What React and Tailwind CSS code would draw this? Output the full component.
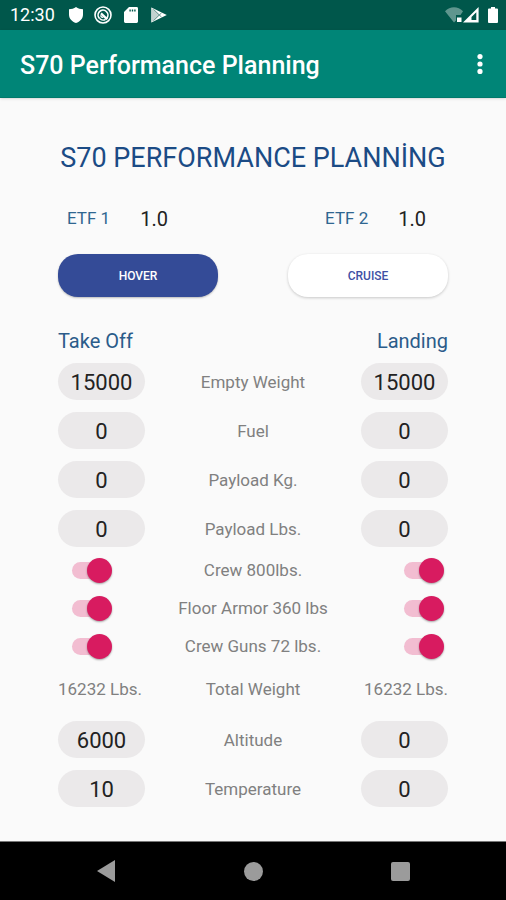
import { useState } from "react";

const WEIGHT_ROWS = [
  { id: "empty", label: "Empty Weight" },
  { id: "fuel", label: "Fuel" },
  { id: "payloadKg", label: "Payload Kg." },
  { id: "payloadLbs", label: "Payload Lbs." },
];

const SWITCH_ROWS = [
  { id: "crew", label: "Crew 800lbs." },
  { id: "armor", label: "Floor Armor 360 lbs" },
  { id: "guns", label: "Crew Guns 72 lbs." },
];

const AIR_ROWS = [
  { id: "altitude", label: "Altitude" },
  { id: "temperature", label: "Temperature" },
];

const INITIAL = {
  takeOff: { empty: "15000", fuel: "0", payloadKg: "0", payloadLbs: "0", crew: true, armor: true, guns: true, altitude: "6000", temperature: "10" },
  landing: { empty: "15000", fuel: "0", payloadKg: "0", payloadLbs: "0", crew: true, armor: true, guns: true, altitude: "0", temperature: "0" },
};

function totalWeight(v) {
  const num = s => Number(s) || 0;
  return num(v.empty) + num(v.fuel) + Math.round(num(v.payloadKg) * 2.2046) + num(v.payloadLbs)
    + (v.crew ? 800 : 0) + (v.armor ? 360 : 0) + (v.guns ? 72 : 0);
}

function StatusBar() {
  return (
    <div className="flex h-[30px] items-center justify-between bg-[#00574b] pl-[10px] pr-2 text-white">
      <div className="flex items-center">
        <span className="text-[18px] leading-5">12:30</span>
        <svg className="ml-[14px] h-4 w-[14px]" viewBox="0 0 14 16" fill="currentColor">
          <path d="M7 0C9 1.6 11.5 2.2 14 2.3V7.5C14 11.6 11 14.8 7 16 3 14.8 0 11.6 0 7.5V2.3C2.5 2.2 5 1.6 7 0Z" />
        </svg>
        <svg className="ml-[11px] h-[18px] w-[18px]" viewBox="0 0 18 18" fill="none" stroke="currentColor">
          <circle cx="9" cy="9" r="8" strokeWidth="1.6" />
          <path d="M5.6 12.6A4.9 4.9 0 1 1 12.6 12.4" strokeWidth="1.7" />
          <path d="M5.6 12.6C7.4 14.3 10 14.3 11.6 13.3" strokeWidth="1.4" />
          <path d="M7 7.4 13.2 13.4" strokeWidth="2.2" />
          <path d="M6.6 9.4A2.4 2.4 0 0 0 9.2 11.4" strokeWidth="1.3" />
        </svg>
        <svg className="ml-3 h-4 w-[14px]" viewBox="0 0 14 16" fill="currentColor">
          <path fillRule="evenodd" d="M5 0H12.6A1.4 1.4 0 0 1 14 1.4V14.6A1.4 1.4 0 0 1 12.6 16H1.4A1.4 1.4 0 0 1 0 14.6V5ZM5.4 2.4V4.6H6.8V2.4ZM7.8 2.4V4.6H9.2V2.4ZM10.2 2.4V4.6H11.6V2.4Z" />
        </svg>
        <svg className="ml-[13px] h-4 w-4" viewBox="0 0 16 16">
          <path d="M.4.4 15.8 8 .4 15.6Z" fill="#ffffff" />
          <path d="M.4.4 8.6 8 .4 15.6Z" fill="#c3d3d0" />
          <path d="M2.4 2.2 10.6 10.2M2.4 13.8 10.6 5.8" stroke="#5f8f88" strokeWidth="1" />
        </svg>
      </div>
      <div className="flex items-center">
        <svg className="h-4 w-[18px]" viewBox="0 0 18 16">
          <path d="M0 4.2C5-1.2 13-1.2 18 4.2L15.5 8H11V13.5L9 15.5Z" fill="#5f968e" />
          <path d="M12 10.5H16.5V15H12Z" fill="#ffffff" />
        </svg>
        <svg className="h-4 w-4" viewBox="0 0 16 16">
          <path fillRule="evenodd" d="M0 15.6 15.6 0V15.6ZM8.5 13H13.3V5.2L8.5 10Z" fill="#ffffff" />
        </svg>
        <svg className="ml-[9px] h-4 w-[10px]" viewBox="0 0 10 16" fill="currentColor">
          <path d="M3 0H7V1.6H9A1 1 0 0 1 10 2.6V15A1 1 0 0 1 9 16H1A1 1 0 0 1 0 15V2.6A1 1 0 0 1 1 1.6H3Z" />
        </svg>
      </div>
    </div>
  );
}

function AppBar() {
  return (
    <header className="flex h-[68px] items-center justify-between border-b border-[#00796b] bg-[#008577] pt-1 pl-5 pr-[15px] text-white shadow-sm">
      <h1 className="text-[25px] font-medium leading-8">S70 Performance Planning</h1>
      <button type="button" aria-label="More options" className="flex h-10 w-[22px] items-center justify-center pb-1">
        <svg className="h-5 w-[6px]" viewBox="0 0 6 20" fill="currentColor">
          <circle cx="3" cy="2.6" r="2.6" />
          <circle cx="3" cy="10" r="2.6" />
          <circle cx="3" cy="17.4" r="2.6" />
        </svg>
      </button>
    </header>
  );
}

function Etf({ label, value }) {
  return (
    <div className="flex items-center gap-[30px] pl-[9px]">
      <span className="text-[17px] text-[#2f6690]">{label}</span>
      <span className="text-[20px] text-[#222222]">{value}</span>
    </div>
  );
}

function Row({ label, left, right }) {
  return (
    <div className="flex h-[37px] items-center justify-between">
      <div className="w-[87px]">{left}</div>
      <span className="text-[17px] leading-6 text-[#808080]">{label}</span>
      <div className="w-[87px]">{right}</div>
    </div>
  );
}

function SwitchRow({ label, left, right }) {
  return (
    <div className="flex h-[38px] items-center justify-between pl-[14px] pr-1">
      {left}
      <span className="pr-[10px] text-[17px] leading-6 text-[#808080]">{label}</span>
      {right}
    </div>
  );
}

function NumberField({ label, value, onChange }) {
  return (
    <input
      type="text"
      inputMode="numeric"
      aria-label={label}
      value={value}
      onChange={e => onChange(e.target.value)}
      className="h-[37px] w-full rounded-full bg-[#ebe9ea] pt-[2px] text-center text-[22px] text-[#222222] outline-none"
    />
  );
}

function Switch({ label, checked, onChange }) {
  return (
    <label className="relative flex h-[25px] w-10 cursor-pointer items-center">
      <input
        type="checkbox"
        role="switch"
        aria-label={label}
        checked={checked}
        onChange={e => onChange(e.target.checked)}
        className="peer sr-only"
      />
      <span className="h-[17px] w-9 rounded-full bg-gray-300 peer-checked:bg-[#f2bdd1]" />
      <span className="absolute left-0 h-[25px] w-[25px] rounded-full bg-gray-50 shadow-[0_1px_2px_rgba(0,0,0,0.35)] peer-checked:left-auto peer-checked:right-0 peer-checked:bg-[#d81b60]" />
    </label>
  );
}

function NavBar() {
  return (
    <nav className="flex h-[59px] items-center justify-between border-t border-[#777777] bg-black px-[95px] text-[#9b9b9b]">
      <button type="button" aria-label="Back" className="flex h-10 w-[22px] items-center justify-center">
        <svg className="h-[22px] w-[18px]" viewBox="0 0 18 22" fill="currentColor">
          <path d="M18 0V22L0 11Z" />
        </svg>
      </button>
      <button type="button" aria-label="Home" className="flex h-10 w-[22px] items-center justify-center">
        <span className="h-[19px] w-[19px] rounded-full bg-[#9b9b9b]" />
      </button>
      <button type="button" aria-label="Recent apps" className="flex h-10 w-[22px] items-center justify-center">
        <span className="h-[19px] w-[19px] rounded-[2px] bg-[#9b9b9b]" />
      </button>
    </nav>
  );
}

export default function App() {
  const [values, setValues] = useState(INITIAL);
  const [mode, setMode] = useState("hover");

  const update = (side, id, value) =>
    setValues(prev => ({ ...prev, [side]: { ...prev[side], [id]: value } }));

  const field = (side, row) => (
    <NumberField
      label={`${row.label} ${side === "takeOff" ? "take off" : "landing"}`}
      value={values[side][row.id]}
      onChange={v => update(side, row.id, v)}
    />
  );

  const toggle = (side, row) => (
    <Switch
      label={`${row.label} ${side === "takeOff" ? "take off" : "landing"}`}
      checked={values[side][row.id]}
      onChange={v => update(side, row.id, v)}
    />
  );

  const modeClass = active =>
    `h-[43px] w-[160px] rounded-[20px] text-[12px] font-medium ${
      active
        ? "bg-[#344b97] text-white shadow-[0_1px_2px_rgba(0,0,0,0.25)]"
        : "bg-white text-[#3f51a5] shadow-[0_1px_3px_rgba(0,0,0,0.2)]"
    }`;

  return (
    <div className="flex min-h-screen flex-col bg-[#fafafa] font-[Roboto,sans-serif]">
      <StatusBar />
      <AppBar />

      <main className="flex-1 px-[58px] pt-10">
        <h2 className="whitespace-nowrap text-center text-[27px] leading-10 text-[#1b4b85]">S70 PERFORMANCE PLANNİNG</h2>

        <div className="mt-[26px] flex h-[30px] items-center justify-between">
          <Etf label="ETF 1" value="1.0" />
          <div className="pr-[22px]">
            <Etf label="ETF 2" value="1.0" />
          </div>
        </div>

        <div className="mt-5 flex justify-between">
          <button type="button" onClick={() => setMode("hover")} className={modeClass(mode === "hover")}>HOVER</button>
          <button type="button" onClick={() => setMode("cruise")} className={modeClass(mode === "cruise")}>CRUISE</button>
        </div>

        <div className="mt-8 flex h-6 items-center justify-between text-[20px] text-[#2b5c8a]">
          <span>Take Off</span>
          <span>Landing</span>
        </div>

        <div className="mt-[10px] flex flex-col gap-3">
          {WEIGHT_ROWS.map(row => (
            <Row key={row.id} label={row.label} left={field("takeOff", row)} right={field("landing", row)} />
          ))}
        </div>

        <div className="mt-1">
          {SWITCH_ROWS.map(row => (
            <SwitchRow key={row.id} label={row.label} left={toggle("takeOff", row)} right={toggle("landing", row)} />
          ))}
        </div>

        <div className="flex h-[50px] items-center justify-between text-[17px] text-[#808080]">
          <span>{totalWeight(values.takeOff)} Lbs.</span>
          <span>Total Weight</span>
          <span>{totalWeight(values.landing)} Lbs.</span>
        </div>

        <div className="mt-[6px] flex flex-col gap-3">
          {AIR_ROWS.map(row => (
            <Row key={row.id} label={row.label} left={field("takeOff", row)} right={field("landing", row)} />
          ))}
        </div>
      </main>

      <NavBar />
    </div>
  );
}
